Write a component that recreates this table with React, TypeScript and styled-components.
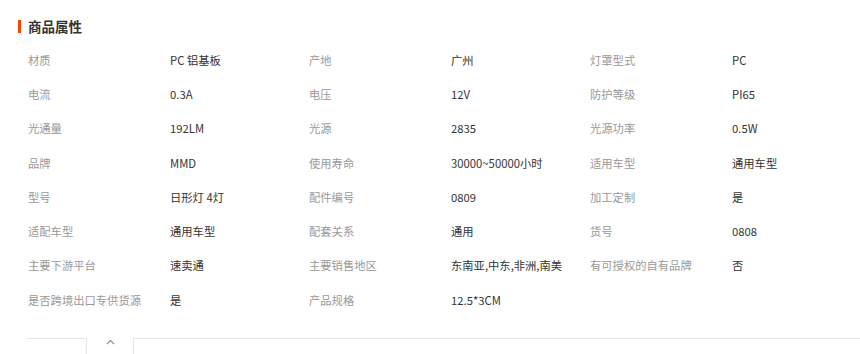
import React from 'react';
import styled, { createGlobalStyle } from 'styled-components';

const GlobalStyle = createGlobalStyle`
  html, body {
    margin: 0;
    padding: 0;
    background: #fff;
  }
  body {
    font-family: "Noto Sans CJK SC", "Noto Sans", sans-serif;
    font-size: 11.3px;
    color: #333;
  }
`;

const Page = styled.div`
  width: 860px;
  height: 354px;
  overflow: hidden;
  padding-top: 19px;
  box-sizing: border-box;
`;

const Title = styled.h3`
  display: flex;
  align-items: center;
  gap: 7px;
  margin: 0 0 10px 18px;
  height: 14px;
  font-size: 13.5px;
  line-height: 14px;
  font-weight: bold;
  color: #333;
  &::before {
    content: '';
    display: block;
    width: 3px;
    height: 13px;
    background: #ff4400;
  }
`;

const Grid = styled.div`
  display: grid;
  grid-template-columns: 142px 139px 142px 139px 142px 139px;
  grid-auto-rows: 34.3px;
  margin-left: 28px;
`;

const Cell = styled.div<{ $label?: boolean }>`
  display: flex;
  align-items: center;
  white-space: nowrap;
  padding-bottom: 1px;
  color: ${(p) => (p.$label ? '#999' : '#333')};
`;

const Footer = styled.div`
  display: flex;
  margin: 21px 0 0 27px;
  height: 20px;
`;

const Line = styled.div<{ $width?: number }>`
  border-top: 1px solid #e5e5e5;
  ${(p) => (p.$width ? `width: ${p.$width}px;` : 'flex: 1;')}
`;

const Toggle = styled.div`
  width: 46px;
  border-left: 1px solid #e5e5e5;
  border-right: 1px solid #e5e5e5;
  display: flex;
  justify-content: center;
  padding-top: 1px;
  svg {
    display: block;
  }
`;

const rows: [string, string][][] = [
  [['材质', 'PC 铝基板'], ['产地', '广州'], ['灯罩型式', 'PC']],
  [['电流', '0.3A'], ['电压', '12V'], ['防护等级', 'PI65']],
  [['光通量', '192LM'], ['光源', '2835'], ['光源功率', '0.5W']],
  [['品牌', 'MMD'], ['使用寿命', '30000~50000小时'], ['适用车型', '通用车型']],
  [['型号', '日形灯 4灯'], ['配件编号', '0809'], ['加工定制', '是']],
  [['适配车型', '通用车型'], ['配套关系', '通用'], ['货号', '0808']],
  [['主要下游平台', '速卖通'], ['主要销售地区', '东南亚,中东,非洲,南美'], ['有可授权的自有品牌', '否']],
  [['是否跨境出口专供货源', '是'], ['产品规格', '12.5*3CM']],
];

export default function App() {
  return (
    <>
      <GlobalStyle />
      <Page>
        <Title>商品属性</Title>
        <Grid>
          {rows.map((row, i) => (
            <React.Fragment key={i}>
              {row.map(([k, v]) => (
                <React.Fragment key={k}>
                  <Cell $label>{k}</Cell>
                  <Cell>{v}</Cell>
                </React.Fragment>
              ))}
              {row.length < 3 && (
                <>
                  <Cell $label />
                  <Cell />
                </>
              )}
            </React.Fragment>
          ))}
        </Grid>
        <Footer>
          <Line $width={59} />
          <Toggle>
            <svg width="9" height="6" viewBox="0 0 9 6">
              <path d="M1 5 L4.5 1.5 L8 5" fill="none" stroke="#8a8f99" strokeWidth="1.2" />
            </svg>
          </Toggle>
          <Line />
        </Footer>
      </Page>
    </>
  );
}
